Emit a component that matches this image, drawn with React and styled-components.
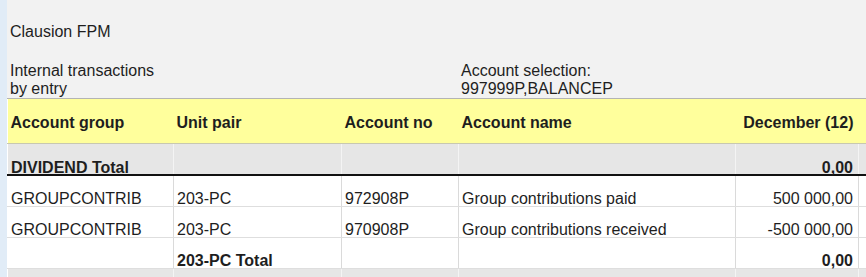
import React from 'react';
import styled, { createGlobalStyle } from 'styled-components';

const GlobalStyle = createGlobalStyle`
  html, body {
    margin: 0;
    padding: 0;
    background: #ffffff;
  }
  body {
    font-family: 'Liberation Sans', Arial, sans-serif;
    color: #1e1e1e;
    overflow: hidden;
  }
`;

const Page = styled.div`
  display: flex;
  width: 866px;
  height: 277px;
  overflow: hidden;
`;

const SideStrip = styled.div`
  flex: 0 0 7px;
  background: #e1ecf7;
`;

const Main = styled.div`
  flex: 1;
  display: flex;
  flex-direction: column;
  min-width: 0;
`;

const ReportHead = styled.div`
  background: #f2f2f2;
  border-bottom: 1px solid #b4b4b4;
  height: 100px;
  box-sizing: border-box;
  padding-top: 23px;
  font-size: 16px;
  line-height: 18px;
`;

const Title = styled.div`
  padding-left: 3px;
`;

const InfoGrid = styled.div`
  display: grid;
  grid-template-columns: 451px 1fr;
  margin-top: 21px;
`;

const InfoCell = styled.div`
  padding-left: 3px;
`;

const Table = styled.table`
  border-collapse: collapse;
  table-layout: fixed;
  width: 859px;
  font-size: 16px;
  line-height: 18px;
`;

const HeadCell = styled.th`
  background: #ffff9c;
  height: 44px;
  box-sizing: border-box;
  padding: 4px ${(p) => (p.$right ? '5px' : '3px')} 0 3px;
  text-align: ${(p) => (p.$right ? 'right' : 'left')};
  font-weight: bold;
  border-bottom: 1px solid #c8c8b0;
  vertical-align: middle;
  white-space: nowrap;
`;

const Row = styled.tr`
  background: ${(p) => (p.$total ? '#e6e6e6' : '#ffffff')};
  font-weight: ${(p) => (p.$total || p.$subtotal ? 'bold' : 'normal')};
`;

const Cell = styled.td`
  height: 30px;
  padding: 0 ${(p) => (p.$right ? '5px' : '3px')} 0 3px;
  line-height: ${(p) => (p.$total ? '13px' : '15px')};
  text-align: ${(p) => (p.$right ? 'right' : 'left')};
  vertical-align: bottom;
  white-space: nowrap;
  border-left: 1px solid ${(p) => (p.$first ? 'transparent' : p.$shade ? '#f4f4f4' : '#dadada')};
  border-bottom: ${(p) => (p.$total ? '2px solid #111111' : '1px solid #dedede')};
`;

const columns = [
  { key: 'group', label: 'Account group', width: 166 },
  { key: 'pair', label: 'Unit pair', width: 168 },
  { key: 'no', label: 'Account no', width: 117 },
  { key: 'name', label: 'Account name', width: 277 },
  { key: 'amount', label: 'December (12)', width: 123, right: true },
  { key: 'extra', label: '', width: 8 },
];

const rows = [
  { type: 'total', group: 'DIVIDEND Total', amount: '0,00' },
  { group: 'GROUPCONTRIB', pair: '203-PC', no: '972908P', name: 'Group contributions paid', amount: '500 000,00' },
  { group: 'GROUPCONTRIB', pair: '203-PC', no: '970908P', name: 'Group contributions received', amount: '-500 000,00' },
  { type: 'subtotal', pair: '203-PC Total', amount: '0,00' },
  { type: 'total' },
];

const App = () => {
  return (
    <>
      <GlobalStyle />
      <Page>
        <SideStrip />
        <Main>
          <ReportHead>
            <Title>Clausion FPM</Title>
            <InfoGrid>
              <InfoCell>
                Internal transactions
                <br />
                by entry
              </InfoCell>
              <InfoCell>
                Account selection:
                <br />
                997999P,BALANCEP
              </InfoCell>
            </InfoGrid>
          </ReportHead>
          <Table>
            <colgroup>
              {columns.map((c) => (
                <col key={c.key} style={{ width: c.width }} />
              ))}
            </colgroup>
            <thead>
              <tr>
                {columns.map((c) => (
                  <HeadCell key={c.key} $right={c.right}>
                    {c.label}
                  </HeadCell>
                ))}
              </tr>
            </thead>
            <tbody>
              {rows.map((r, i) => (
                <Row key={i} $total={r.type === 'total'} $subtotal={r.type === 'subtotal'}>
                  {columns.map((c, j) => (
                    <Cell
                      key={c.key}
                      $first={j === 0}
                      $right={c.right}
                      $total={r.type === 'total'}
                      $shade={r.type === 'total'}
                    >
                      {r[c.key] || ''}
                    </Cell>
                  ))}
                </Row>
              ))}
            </tbody>
          </Table>
        </Main>
      </Page>
    </>
  );
};

export default App;
